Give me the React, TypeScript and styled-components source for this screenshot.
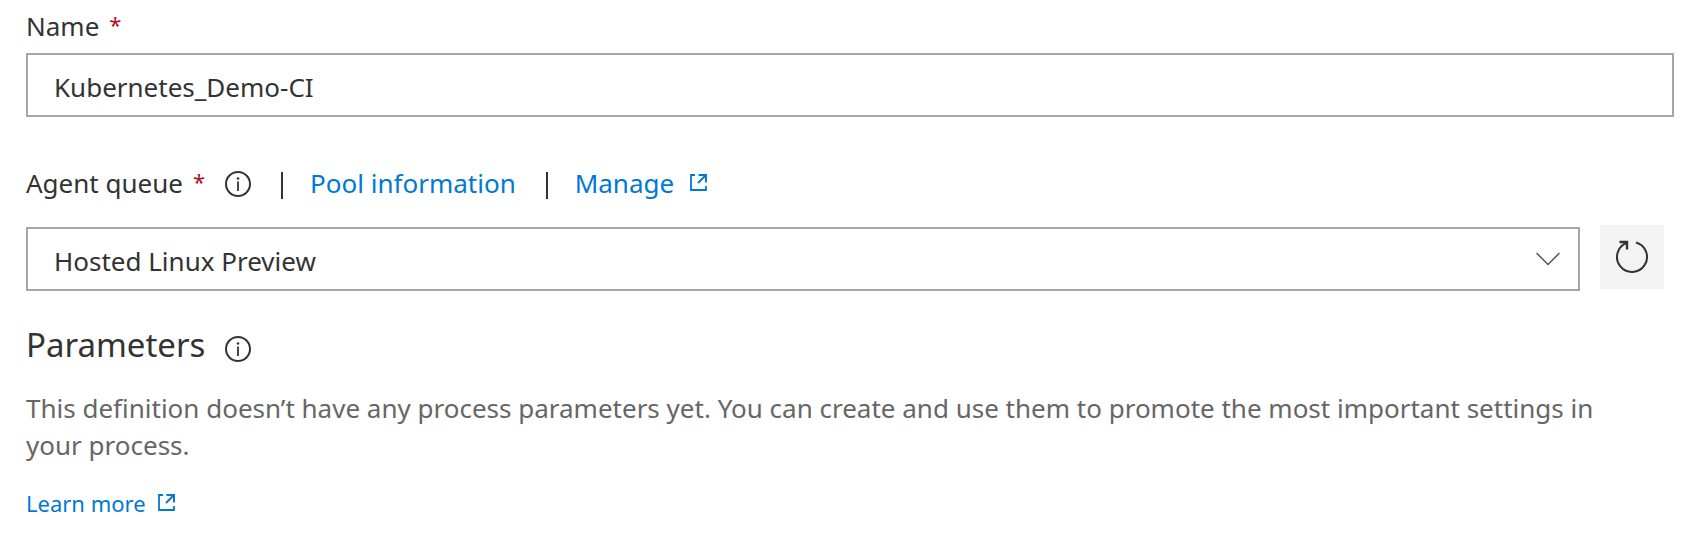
import React from "react";
import styled, { createGlobalStyle } from "styled-components";

const GlobalStyle = createGlobalStyle`
  *, *::before, *::after { box-sizing: border-box; }
  body {
    margin: 0;
    background: #fff;
    color: #333;
    font-family: "Segoe UI", "Noto Sans", "Open Sans", sans-serif;
    font-size: 26px;
    line-height: 38px;
  }
`;

const Form = styled.form`
  display: flex;
  flex-direction: column;
  padding: 7px 21px 16px 26px;
`;

const LabelRow = styled.div`
  display: flex;
  align-items: center;
`;

const Label = styled.label``;

const Required = styled.span`
  align-self: flex-start;
  margin-left: 10px;
  color: #b10e1c;
  font-size: 22px;
  line-height: 34px;
`;

const NameField = styled.div`
  display: flex;
  flex-direction: column;
  gap: 8px;
  margin-bottom: 47px;
`;

const controlStyles = `
  display: block;
  width: 100%;
  height: 64px;
  padding: 3px 26px 0;
  border: 2px solid #a6a6a6;
  border-radius: 0;
  background: #fff;
  color: #333;
  font: inherit;
  outline: none;
`;

const TextInput = styled.input`
  ${controlStyles}
`;

const Select = styled.select`
  ${controlStyles}
  appearance: none;
`;

const Divider = styled.span`
  width: 2px;
  height: 27px;
  margin: 4px 27px 0 30px;
  background: #333;
`;

const Link = styled.a<{ $small?: boolean }>`
  display: inline-flex;
  align-items: center;
  gap: ${(p) => (p.$small ? 12 : 16)}px;
  color: #0078d7;
  font-size: ${(p) => (p.$small ? 22 : 26)}px;
  text-decoration: none;

  svg {
    margin-bottom: 2px;
  }
`;

const IconButton = styled.button`
  display: flex;
  margin: 2px 0 0 20px;
  padding: 0;
  border: 0;
  background: none;
  color: #333;
`;

const QueueRow = styled.div`
  display: flex;
  align-items: flex-end;
  gap: 20px;
  margin: 23px 10px 29px 0;
`;

const SelectWrap = styled.div`
  position: relative;
  flex: 1;
`;

const Chevron = styled.svg`
  position: absolute;
  top: 25px;
  right: 20px;
  pointer-events: none;
`;

const RefreshButton = styled.button`
  display: flex;
  align-items: center;
  justify-content: center;
  width: 64px;
  height: 64px;
  margin-bottom: 2px;
  padding: 0;
  border: 0;
  background: #f3f3f3;
  color: #333;
`;

const HeadingRow = styled(LabelRow)`
  align-items: flex-end;

  button {
    margin-bottom: 8px;
  }
`;

const Heading = styled.h2`
  margin: 0;
  font-size: 33px;
  font-weight: 400;
  line-height: 50px;
`;

const Description = styled.p`
  margin: 20px 40px 20px 0;
  color: #666;
  line-height: 37px;
`;

const InfoIcon = () => (
  <svg width="26" height="26" viewBox="0 0 26 26" fill="none" aria-hidden="true">
    <circle cx="13" cy="13" r="12" stroke="currentColor" strokeWidth="2" />
    <path d="M13 10.5V20" stroke="currentColor" strokeWidth="1.8" />
    <circle cx="13" cy="7.5" r="1.3" fill="currentColor" />
  </svg>
);

const ExternalIcon = () => (
  <svg width="17" height="17" viewBox="0 0 17 17" fill="none" stroke="currentColor" aria-hidden="true">
    <path d="M5 1H1V16H16V12" strokeWidth="1.8" />
    <path d="M8.5 1H16V8.5M15.5 1.5L8 9" strokeWidth="1.9" />
  </svg>
);

export default function App() {
  return (
    <>
      <GlobalStyle />
      <Form onSubmit={(e) => e.preventDefault()}>
        <NameField>
          <LabelRow>
            <Label htmlFor="name">Name</Label>
            <Required>*</Required>
          </LabelRow>
          <TextInput id="name" type="text" defaultValue="Kubernetes_Demo-CI" spellCheck={false} />
        </NameField>

        <LabelRow>
          <Label htmlFor="queue">Agent queue</Label>
          <Required>*</Required>
          <IconButton type="button" aria-label="About agent queue">
            <InfoIcon />
          </IconButton>
          <Divider />
          <Link href="#pool">Pool information</Link>
          <Divider />
          <Link href="#manage">
            Manage
            <ExternalIcon />
          </Link>
        </LabelRow>

        <QueueRow>
          <SelectWrap>
            <Select id="queue" defaultValue="linux">
              <option value="linux">Hosted Linux Preview</option>
            </Select>
            <Chevron width="24" height="14" viewBox="0 0 24 14" fill="none" aria-hidden="true">
              <path d="M0.5 1L12 12.5L23.5 1" stroke="#555" strokeWidth="1.5" />
            </Chevron>
          </SelectWrap>
          <RefreshButton type="button" aria-label="Refresh">
            <svg width="34" height="34" viewBox="0 0 34 34" fill="none" stroke="currentColor" aria-hidden="true">
              <path d="M21 2.5A15 15 0 1 1 11.5 3" strokeWidth="2" />
              <path d="M4.5 2H12V9.5" strokeWidth="2.4" />
            </svg>
          </RefreshButton>
        </QueueRow>

        <HeadingRow>
          <Heading>Parameters</Heading>
          <IconButton type="button" aria-label="About parameters">
            <InfoIcon />
          </IconButton>
        </HeadingRow>
        <Description>
          This definition doesn’t have any process parameters yet. You can create and use them to
          promote the most important settings in your process.
        </Description>
        <LabelRow>
          <Link href="#learn" $small>
            Learn more
            <ExternalIcon />
          </Link>
        </LabelRow>
      </Form>
    </>
  );
}
